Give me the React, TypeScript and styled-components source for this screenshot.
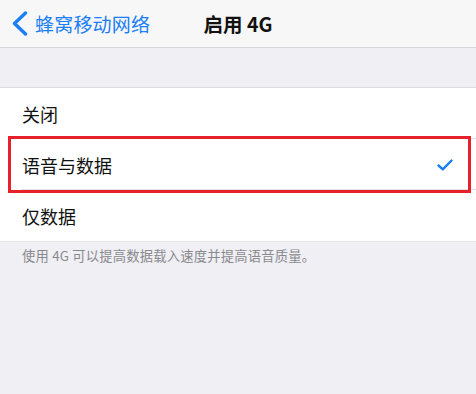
import React from "react";
import styled, { createGlobalStyle } from "styled-components";

const Global = createGlobalStyle`
  html, body { margin: 0; padding: 0; background: #efeff4; }
  body { font-family: "Noto Sans CJK SC", "Noto Sans", "Liberation Sans", sans-serif; }
  * { box-sizing: border-box; }
`;

const Page = styled.div`
  width: 476px;
  height: 394px;
  background: #efeff4;
  display: flex;
  flex-direction: column;
  overflow: hidden;
`;

const NavBar = styled.div`
  height: 48px;
  background: #f7f7f8;
  border-bottom: 1px solid #d6d6da;
  display: grid;
  grid-template-columns: 1fr auto 1fr;
  align-items: center;
  padding: 0 12px;
`;

const Back = styled.div`
  display: flex;
  align-items: center;
  gap: 7px;
  color: #1a7ff5;
  font-size: 19px;
  letter-spacing: 0.2px;
`;

const Title = styled.div`
  font-size: 19.5px;
  font-weight: 700;
  color: #111;
  margin-left: 0px;
`;

const Spacer = styled.div`
  height: 40px;
  border-bottom: 1px solid #dcdce0;
`;

const List = styled.div`
  background: #fff;
  display: flex;
  flex-direction: column;
`;

const Row = styled.div<{ $selected?: boolean; $last?: boolean }>`
  position: relative;
  height: 51px;
  display: flex;
  align-items: center;
  justify-content: space-between;
  padding: 0 23px 0 22px;
  font-size: 18px;
  color: #111;
  &::before {
    content: "";
    display: ${(p) => (p.$last ? "none" : "block")};
    position: absolute;
    left: 21px;
    right: 0;
    bottom: 0;
    height: 1px;
    background: #e2e2e6;
  }
  &::after {
    content: "";
    display: ${(p) => (p.$selected ? "block" : "none")};
    position: absolute;
    left: 8px;
    right: 5px;
    top: -3px;
    bottom: -3px;
    border: 3px solid #e8202a;
  }
`;

const Footer = styled.div`
  border-top: 1px solid #e4e4e8;
  padding: 4px 22px 0;
  font-size: 13.3px;
  color: #8a8a8e;
  letter-spacing: 0.2px;
`;

const Check = () => (
  <svg width="16" height="12" viewBox="0 0 16 12">
    <path d="M1.5 6.5 L5.8 10.3 L14.5 1.5" fill="none" stroke="#1a7ff5" strokeWidth="2.4" strokeLinecap="round" strokeLinejoin="round" />
  </svg>
);

const Chevron = () => (
  <svg width="16" height="25" viewBox="0 0 16 25">
    <path d="M13.5 2 L2.5 12.5 L13.5 23" fill="none" stroke="#1a7ff5" strokeWidth="3.4" strokeLinecap="round" strokeLinejoin="round" />
  </svg>
);

const options = ["关闭", "语音与数据", "仅数据"];
const selectedIndex = 1;

export default function App() {
  return (
    <Page>
      <Global />
      <NavBar>
        <Back>
          <Chevron />
          <span>蜂窝移动网络</span>
        </Back>
        <Title>启用 4G</Title>
        <div />
      </NavBar>
      <Spacer />
      <List>
        {options.map((o, i) => (
          <Row key={o} $selected={i === selectedIndex} $last={i === options.length - 1}>
            <span>{o}</span>
            {i === selectedIndex && <Check />}
          </Row>
        ))}
      </List>
      <Footer>使用 4G 可以提高数据载入速度并提高语音质量。</Footer>
    </Page>
  );
}
